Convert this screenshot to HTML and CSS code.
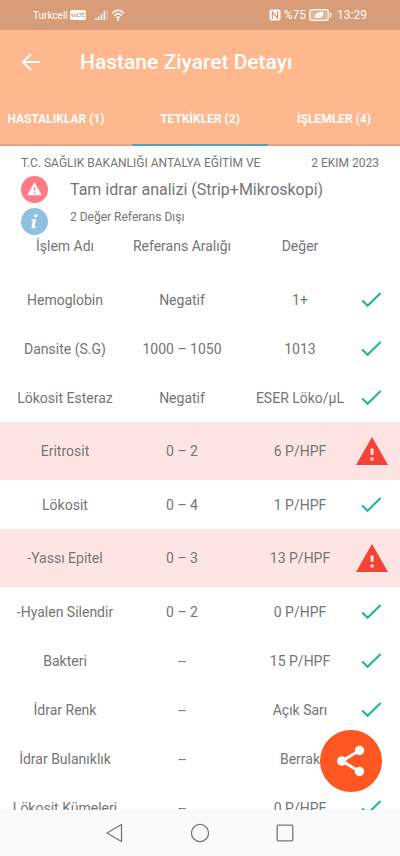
FILE: index.html
```
<!DOCTYPE html>
<html lang="tr">
<head>
  <meta charset="UTF-8">
  <meta name="viewport" content="width=device-width, initial-scale=1.0">
  <title>Hastane Ziyaret Detayı</title>
  <link rel="stylesheet" href="styles.css">
</head>
<body>

  <!-- Shared icons -->
  <svg class="sprite" aria-hidden="true">
    <symbol id="check" viewBox="0 0 24 24"><path d="M2.2 12.6l5.4 5.1L20.6 5" fill="none" stroke="#1fb598" stroke-width="2.1"/></symbol>
    <symbol id="warning" viewBox="0 0 32 28"><path d="M16 0L32 28H0z" fill="#f44336"/><path d="M14.6 11.6h3v6.2h-3zM14.6 20.4h3v3h-3z" fill="#fde4e4"/></symbol>
  </svg>

  <div class="status-bar">
    <div class="status-group">
      <span>Turkcell</span>
      <span class="volte">VoLTE</span>
      <svg class="signal" width="13" height="12" viewBox="0 0 13 12"><path d="M1 9v2M3.8 7.5V11M6.6 5V11M9.4 2v9" stroke="#fff" stroke-width="1.5"/><path d="M12 1v10" stroke="#fff" stroke-opacity=".4" stroke-width="1.3"/></svg>
      <svg width="14" height="12" viewBox="0 0 14 12"><path d="M1 4.3Q7-1.6 13 4.3M3 6.6q4-3.8 8 0M5 8.8q2-1.8 4 0" fill="none" stroke="#fff" stroke-width="1.4"/><circle cx="7" cy="10.7" r="1.2" fill="#fff"/></svg>
    </div>
    <div class="status-group status-right">
      <svg width="12" height="12" viewBox="0 0 12 12"><rect x=".5" y=".5" width="11" height="11" rx="2" fill="#fff"/><path d="M3.4 10V3l5.2 6.2V2" fill="none" stroke="#d99c78" stroke-width="1.4"/></svg>
      <span>%75</span>
      <svg width="23" height="12" viewBox="0 0 23 12"><rect x=".7" y=".7" width="18.6" height="10.6" rx="2.4" fill="#fff" fill-opacity=".25" stroke="#fff" stroke-width="1.3"/><path d="M21.6 3.8v4.4" stroke="#fff" stroke-width="1.4"/><path d="M6 9.7C5.2 5 8.6 2.7 14.3 2.7 14.2 8 11.5 9.9 7.5 8.7z" fill="#fff"/><path d="M6 10l4.5-4" stroke="#d99c78" stroke-width=".6"/></svg>
      <span class="clock">13:29</span>
    </div>
  </div>

  <header class="app-bar">
    <button class="back" aria-label="Geri">
      <svg width="20" height="18" viewBox="0 0 20 18"><path d="M19 9H2M10 1L2 9l8 8" fill="none" stroke="#fff" stroke-width="2"/></svg>
    </button>
    <h1>Hastane Ziyaret Detayı</h1>
  </header>

  <nav class="tabs">
    <a href="#hastaliklar">HASTALIKLAR (1)</a>
    <a href="#tetkikler" class="active">TETKİKLER (2)</a>
    <a href="#islemler">İŞLEMLER (4)</a>
  </nav>

  <main>
    <div class="visit">
      <span>T.C. SAĞLIK BAKANLIĞI ANTALYA EĞİTİM VE</span>
      <span>2 EKIM 2023</span>
    </div>
    <div class="test">
      <svg width="27" height="27" viewBox="0 0 27 27"><circle cx="13.5" cy="13.5" r="13.5" fill="#ff7b81"/><path d="M13.5 6.3l7.3 13H6.2z" fill="#fff"/><path d="M12.8 11h1.4v3.8h-1.4zM12.8 16h1.4v1.6h-1.4z" fill="#ff7b81"/></svg>
      <h2>Tam idrar analizi (Strip+Mikroskopi)</h2>
    </div>
    <div class="test note">
      <svg width="27" height="27" viewBox="0 0 27 27"><circle cx="13.5" cy="13.5" r="13.5" fill="#8dc1e3"/><circle cx="14.7" cy="7.7" r="1.8" fill="#fff"/><path d="M10.3 11.7l5-.6-1.9 7.6q0 .8 2-.7l.5.5q-2.4 2.4-4.3 2-1.5-.4-1-2.2l1.3-5.4-1.7-.5z" fill="#fff"/></svg>
      <p>2 Değer Referans Dışı</p>
    </div>

    <table>
      <colgroup>
        <col class="col-name"><col class="col-range"><col class="col-value"><col>
      </colgroup>
      <thead>
        <tr><th>İşlem Adı</th><th>Referans Aralığı</th><th>Değer</th><td></td></tr>
      </thead>
      <tbody>
        <tr><td>Hemoglobin</td><td>Negatif</td><td>1+</td><td><svg class="check"><use href="#check"/></svg></td></tr>
        <tr><td>Dansite (S.G)</td><td>1000 – 1050</td><td>1013</td><td><svg class="check"><use href="#check"/></svg></td></tr>
        <tr><td>Lökosit Esteraz</td><td>Negatif</td><td>ESER Löko/µL</td><td><svg class="check"><use href="#check"/></svg></td></tr>
        <tr class="alert"><td>Eritrosit</td><td>0 – 2</td><td>6 P/HPF</td><td><svg class="warning"><use href="#warning"/></svg></td></tr>
        <tr><td>Lökosit</td><td>0 – 4</td><td>1 P/HPF</td><td><svg class="check"><use href="#check"/></svg></td></tr>
        <tr class="alert"><td>-Yassı Epitel</td><td>0 – 3</td><td>13 P/HPF</td><td><svg class="warning"><use href="#warning"/></svg></td></tr>
        <tr><td>-Hyalen Silendir</td><td>0 – 2</td><td>0 P/HPF</td><td><svg class="check"><use href="#check"/></svg></td></tr>
        <tr><td>Bakteri</td><td>--</td><td>15 P/HPF</td><td><svg class="check"><use href="#check"/></svg></td></tr>
        <tr><td>İdrar Renk</td><td>--</td><td>Açık Sarı</td><td><svg class="check"><use href="#check"/></svg></td></tr>
        <tr><td>İdrar Bulanıklık</td><td>--</td><td>Berrak</td><td><svg class="check"><use href="#check"/></svg></td></tr>
        <tr><td>Lökosit Kümeleri</td><td>--</td><td>0 P/HPF</td><td><svg class="check"><use href="#check"/></svg></td></tr>
      </tbody>
    </table>

    <button class="share" aria-label="Paylaş">
      <svg width="28" height="32" viewBox="0 0 28 32"><path d="M22.5 5.5L5 16l17.5 10.5" fill="none" stroke="#fff" stroke-width="3"/><g fill="#fff"><circle cx="22.5" cy="5.5" r="4.7"/><circle cx="4.7" cy="16" r="4.7"/><circle cx="22.5" cy="26.5" r="4.7"/></g></svg>
    </button>
  </main>

  <footer class="nav-bar">
    <button aria-label="Geri"><svg width="20" height="20" viewBox="0 0 20 20"><path d="M16.5 1.5v17L2 10z" fill="none" stroke="#777" stroke-width="1.3" stroke-linejoin="round"/></svg></button>
    <button aria-label="Ana ekran"><svg width="20" height="20" viewBox="0 0 20 20"><circle cx="10" cy="10" r="8.6" fill="none" stroke="#777" stroke-width="1.3"/></svg></button>
    <button aria-label="Son uygulamalar"><svg width="20" height="20" viewBox="0 0 20 20"><rect x="2.2" y="2.2" width="15.6" height="15.6" rx="1" fill="none" stroke="#777" stroke-width="1.3"/></svg></button>
  </footer>

</body>
</html>
```
FILE: styles.css
```
* {
  box-sizing: border-box;
}

body {
  margin: 0;
  height: 100vh;
  display: flex;
  flex-direction: column;
  overflow: hidden;
  background-color: #fefefe;
  color: #757575;
  font-family: Roboto, sans-serif;
  font-size: 14px;
}

h1, h2, p {
  margin: 0;
  font-weight: 400;
}

button {
  display: flex;
  align-items: center;
  justify-content: center;
  padding: 0;
  border: none;
  background: none;
  cursor: pointer;
}

svg {
  display: block;
  flex-shrink: 0;
}

.sprite {
  position: absolute;
  width: 0;
  height: 0;
}

/* Phone status bar */
.status-bar {
  display: flex;
  justify-content: space-between;
  align-items: center;
  height: 30px;
  padding: 0 33px;
  background-color: #d99c78;
  color: #fff;
  font-size: 10px;
}

.status-group {
  display: flex;
  align-items: center;
  gap: 2px;
}

.status-right {
  gap: 3px;
  font-size: 12px;
}

.volte {
  padding: 0 1px;
  border-radius: 2px;
  background-color: #fff;
  color: #d99c78;
  font-size: 5px;
  font-weight: 700;
  line-height: 10px;
}

.signal {
  margin: 0 1px 0 7px;
}

.clock {
  margin-left: 2px;
}

/* App bar and tabs */
.app-bar {
  display: flex;
  align-items: center;
  gap: 39px;
  height: 64px;
  padding: 0 21px;
  background-color: #ffb78d;
  color: #fff;
}

.app-bar h1 {
  font-size: 21px;
  font-weight: 500;
}

.tabs {
  display: flex;
  height: 52px;
  background-color: #ffb78d;
  border-bottom: 2px solid #e5a47f;
}

.tabs a {
  width: 33%;
  display: flex;
  align-items: center;
  justify-content: center;
  margin-bottom: -2px;
  border-bottom: 2px solid transparent;
  color: #fff;
  font-size: 12px;
  font-weight: 700;
  text-decoration: none;
  white-space: nowrap;
}

.tabs a:first-child {
  padding-right: 20px;
}

.tabs .active {
  width: 34%;
  border-bottom-color: #4ba3c3;
}

/* Results */
main {
  position: relative;
  flex: 1;
  min-height: 0;
  overflow: hidden;
}

.visit {
  display: flex;
  justify-content: space-between;
  padding: 9px 21px 5px;
  font-size: 12px;
  line-height: 16px;
}

.test {
  display: flex;
  align-items: center;
  gap: 22px;
  height: 27px;
  margin-bottom: 5px;
  padding: 0 21px;
}

.test h2 {
  font-size: 16px;
}

.note {
  align-items: flex-start;
  margin-bottom: 0;
  font-size: 12px;
  line-height: 18px;
}

table {
  width: 100%;
  border-collapse: collapse;
  table-layout: fixed;
  text-align: center;
}

.col-name {
  width: 31%;
}

.col-range {
  width: 29%;
}

.col-value {
  width: 30%;
}

th {
  font-weight: 400;
}

th, td {
  height: 49px;
  padding: 0;
  line-height: 20px;
}

th:first-child, td:first-child {
  padding-left: 6px;
}

td:last-child {
  padding-right: 17px;
}

thead th, thead td {
  height: 40px;
  padding-bottom: 18px;
}

td svg {
  display: inline-block;
  margin: 0 -5px;
  vertical-align: middle;
}

.alert {
  background-color: #fee5e4;
}

.alert td {
  height: 58px;
}

.check {
  width: 24px;
  height: 24px;
}

.warning {
  width: 32px;
  height: 28px;
}

.share {
  position: absolute;
  right: 18px;
  bottom: 18px;
  width: 62px;
  height: 62px;
  border-radius: 50%;
  background-color: #ff5722;
}

/* Phone navigation bar */
.nav-bar {
  display: flex;
  align-items: center;
  justify-content: center;
  gap: 65px;
  height: 46px;
  background-color: #fafafa;
}
```
